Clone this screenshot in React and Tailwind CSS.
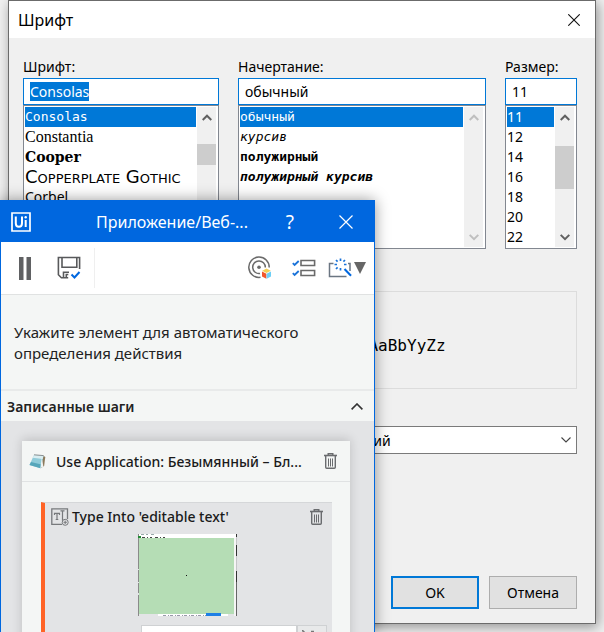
import { useEffect, useRef } from "react";

const UI = "font-['Noto_Sans','Open_Sans',sans-serif]";

const MONO = "font-['DejaVu_Sans_Mono',monospace] text-[13px]";

const FONTS = [
  { name: "Consolas", style: MONO },
  { name: "Constantia", style: "font-['Liberation_Serif',serif] text-[16px]" },
  { name: "Cooper", style: "font-['DejaVu_Serif',serif] text-[14px] font-black" },
  { name: "Copperplate Gothic", style: "font-['DejaVu_Sans',sans-serif] text-[18px] font-normal [font-variant-caps:small-caps]" },
  { name: "Corbel", style: "text-[14px]" },
  { name: "Courier", style: "font-['Liberation_Mono',monospace] text-[13px]" },
  { name: "Ebrima", style: "text-[14px]" },
];

const STYLES = [
  { name: "обычный", style: MONO },
  { name: "курсив", style: MONO + " italic" },
  { name: "полужирный", style: MONO + " font-bold" },
  { name: "полужирный курсив", style: MONO + " font-bold italic" },
];

const SIZES = ["11", "12", "14", "16", "18", "20", "22"].map((name) => ({ name, style: "text-[14px]" }));

function Chevron({ down, className }) {
  return (
    <svg viewBox="0 0 10 7" className={className} fill="none" stroke="currentColor" strokeWidth="2" aria-hidden="true">
      <path d={down ? "M.7 .9 5 5.2 9.3 .9" : "M.7 6 5 1.7 9.3 6"} />
    </svg>
  );
}

function ListBox({ label, items, thumb, disabled }) {
  return (
    <div className="flex h-36 border border-[#828790] bg-white p-px">
      <ul role="listbox" aria-label={label} className="min-w-0 flex-1 overflow-hidden">
        {items.map((item, i) => (
          <li
            key={item.name}
            role="option"
            aria-selected={i === 0}
            className={`h-5 whitespace-nowrap leading-5 ${item.style} ${i === 0 ? "bg-[#0078d7] text-white" : ""}`}
          >
            {item.name}
          </li>
        ))}
      </ul>
      <div className={`ml-px mr-px flex w-[19px] flex-col items-center justify-between bg-[#f0f0f0] ${disabled ? "text-[#bfbfbf]" : "text-[#606060]"}`}>
        <button type="button" aria-label="Вверх" disabled={disabled} className="flex h-5 w-full items-center justify-center">
          <Chevron className="h-[7px] w-[10px]" />
        </button>
        <div className="w-full flex-1">{thumb && <div className={`bg-[#cdcdcd] ${thumb}`} />}</div>
        <button type="button" aria-label="Вниз" disabled={disabled} className="flex h-5 w-full items-center justify-center">
          <Chevron down className="h-[7px] w-[10px]" />
        </button>
      </div>
    </div>
  );
}

function Field({ id, label, value, items, thumb, disabled, selected }) {
  const ref = useRef(null);
  useEffect(() => {
    if (selected) {
      ref.current.focus();
      ref.current.select();
    }
  }, [selected]);
  return (
    <div className="min-w-0">
      <label htmlFor={id} className="block h-[22px] text-[14px] leading-[22px]">{label}</label>
      <input
        id={id}
        ref={ref}
        defaultValue={value}
        className="block h-[27px] w-full border border-[#0078d7] bg-white px-1.5 text-[14px] leading-5 outline-none selection:bg-[#0078d7] selection:text-white"
      />
      <ListBox label={label} items={items} thumb={thumb} disabled={disabled} />
    </div>
  );
}

function FontDialog() {
  return (
    <section aria-label="Шрифт" className="absolute inset-x-2 top-0 flex h-[624px] flex-col border border-[#6b6b6b] bg-[#f0f0f0] shadow-[2px_3px_12px_rgba(0,0,0,0.4)]">
      <header className="flex h-[37px] shrink-0 items-center justify-between bg-white pl-[9px] pr-[15px]">
        <h1 className="text-[16px]">Шрифт</h1>
        <button type="button" aria-label="Закрыть">
          <svg viewBox="0 0 12 12" className="size-3" stroke="#111" strokeWidth="1.1" aria-hidden="true">
            <path d="M.3 .3 11.7 11.7M11.7 .3 .3 11.7" />
          </svg>
        </button>
      </header>
      <div className="flex flex-1 flex-col pl-3.5 pr-[18px] pt-[18px]">
        <div className="grid grid-cols-[196fr_248fr_72fr] gap-[19px]">
          <Field id="font" label="Шрифт:" value="Consolas" items={FONTS} thumb="mt-[17px] h-[21px]" selected />
          <Field id="style" label="Начертание:" value="обычный" items={STYLES} disabled />
          <Field id="size" label="Размер:" value="11" items={SIZES} thumb="mt-[19px] h-[43px]" />
        </div>
        <div className="ml-[214px] mt-[42px] flex h-[98px] items-center justify-center border border-[#dcdcdc] pt-3 font-['DejaVu_Sans_Mono',monospace] text-[16px]">
          AaBbYyZz
        </div>
        <div className="relative ml-[214px] mt-[37px]">
          <select aria-label="Набор символов" className="block h-7 w-full appearance-none border border-[#7a7a7a] bg-white px-1.5 text-[14px]">
            <option>Западноевропейский</option>
          </select>
          <svg viewBox="0 0 10 6" className="pointer-events-none absolute right-1.5 top-[11px] h-1.5 w-2.5" fill="none" stroke="#444" strokeWidth="1.1" aria-hidden="true">
            <path d="M.5 .5 5 5 9.5 .5" />
          </svg>
        </div>
        <div className="mb-3.5 mt-auto flex justify-end gap-2.5 text-[14px]">
          <button type="button" className="h-[33px] w-[88px] border-2 border-[#0078d7] bg-[#e1e1e1]">OK</button>
          <button type="button" className="h-[33px] w-[88px] border border-[#adadad] bg-[#e1e1e1]">Отмена</button>
        </div>
      </div>
    </section>
  );
}

function TrashIcon() {
  return (
    <svg viewBox="0 0 13 16" className="h-4 w-[13px]" fill="none" stroke="#6a6c6f" aria-hidden="true">
      <path d="M0 2.5h13" strokeWidth="1.6" />
      <path d="M4.2 2V.7h4.6V2M1.7 3v11.3q0 1 1 1h7.6q1 0 1-1V3" strokeWidth="1.4" />
      <path d="M4.5 5.5v8M6.5 5.5v8M8.5 5.5v8" strokeWidth="1" />
    </svg>
  );
}

function SaveIcon() {
  return (
    <svg viewBox="0 0 24 24" className="size-6" fill="none" stroke="#58595b" strokeWidth="1.6" aria-hidden="true">
      <path d="M22.6 13V1.5H1.4v17.2l3 3h6.8M5 2v9.3h14.8V2M6.5 21.5v-5.2H12M9.3 21.5v-3h2" />
      <path d="m14.5 18.5 3 3 5-5.5" stroke="#0067df" strokeWidth="2" />
    </svg>
  );
}

function TargetIcon() {
  return (
    <svg viewBox="0 0 24 24" className="size-6" fill="none" stroke="#6a6a6a" strokeWidth="1.5" aria-hidden="true">
      <path d="M12.5 21.3A10.2 10.2 0 1 1 21.2 11.5" />
      <path d="M12 17.5A6.3 6.3 0 1 1 17.3 11.5" />
      <circle cx="11" cy="11.3" r="1.8" fill="#6a6a6a" stroke="none" />
      <path d="m18.5 12.5 4.3 2.2-4.3 2.3-4.3-2.3z" fill="#f5cf55" stroke="none" />
      <path d="m14 15.5 4.4 2.2v5L14 20.5z" fill="#f2562c" stroke="none" />
      <path d="m23 15.5-4.4 2.2v5l4.4-2.2z" fill="#6dcff6" stroke="none" />
    </svg>
  );
}

function ChecklistIcon() {
  return (
    <svg viewBox="0 0 24 18" className="h-[18px] w-6" fill="none" stroke="#6a6a6a" strokeWidth="1.6" aria-hidden="true">
      <path d="M9 1.5h13.6v5H9zM9 11.5h13.6v5H9z" />
      <path d="m.8 4.2 1.8 1.8L6.7 2M.8 14.2 2.6 16l4.1-4" stroke="#1a73d9" strokeWidth="1.8" />
    </svg>
  );
}

function WandIcon() {
  return (
    <svg viewBox="0 0 24 19" className="h-[19px] w-6 overflow-visible" fill="none" stroke="#6b7682" strokeWidth="1.5" aria-hidden="true">
      <path d="M5.5 4.5h-4v13h17M20 4.5h2V12" />
      <path d="m16.5 10 6.5 6.8" stroke="#0067df" strokeWidth="2" />
      <path
        d="M12.5 -.5v2.5M12.5 9v2.5M6.5 5.5H9M16 5.5h2.5M8 1l1.6 1.6M17 1l-1.6 1.6M8 10l1.6-1.6"
        stroke="#1a73d9"
        strokeWidth="1.7"
      />
    </svg>
  );
}

function NotepadIcon() {
  return (
    <svg viewBox="0 0 17 16" className="h-4 w-[17px]" aria-hidden="true">
      <path d="m13.5 2 2.8 2-1.2 9-3.2 2z" fill="#8c7a5c" />
      <path d="m5 2 9.5.8-3 12.4L.5 12z" fill="#8fcbd9" />
      <path d="m5 2 9.5.8-.8 3.2L3.7 4.8z" fill="#d9edf1" />
      <path d="m2 9 10.4 2.4-.9 3.8L.5 12z" fill="#56a6ba" />
      <path d="m12.8 4 1.6 9.8-3 1.3z" fill="#eef3f3" />
      <path d="M5 1.8 14.5 2.6" stroke="#8a9092" />
    </svg>
  );
}

function TypeIcon() {
  return (
    <svg viewBox="0 0 18 18" className="size-[18px]" fill="none" stroke="#77797c" aria-hidden="true">
      <path d="M11 16.4H.8V.8h15.7V11" strokeWidth="1.3" />
      <path d="M3.5 7V5.3h5V7M6 5.3v6M4.7 11.5h2.6M9.5 2.8h4M11.5 2.8v10M11 13h1.5" strokeWidth="1.2" />
      <circle cx="14.2" cy="14.3" r="3" fill="#e3e4e6" />
      <path d="M12.5 14.3h3.4M14.2 12.6V16" />
    </svg>
  );
}

function Thumbnail() {
  return (
    <svg viewBox="0 0 99 82" className="h-[82px] w-[99px]" shapeRendering="crispEdges" role="img" aria-label="Снимок элемента">
      <path d="M0 0h99v82H0z" fill="#e3e4e6" />
      <path d="M1 0h97v5H1zM20 80h70v2H20z" fill="#fff" />
      <path d="M96 4h2v78h-2z" fill="#f5f5f5" />
      <path d="M1 4h95v76H1z" fill="#b5ddb5" />
      <path d="M.5 0v82" stroke="#8a8a8a" strokeDasharray="35 1 12 1 10 2" />
      <path d="M98.5 0v3M98.5 11v11M98.5 37v11" stroke="#333" />
      <path d="M98.5 3v8M98.5 22v15" stroke="#c4c5c7" />
      <path d="M98.5 48v34" stroke="#666" />
      <path d="M3 .5h15" stroke="#9aa" strokeDasharray="3 2 2 3" />
      <path d="M4 3.5h25" stroke="#444" strokeDasharray="3 2 1 2 2 3" />
      <path d="M0 2h3v2H0z" fill="#228b35" />
      <path d="M25 81.5h43" stroke="#99a" strokeDasharray="3 2 1 1" />
      <path d="M68 79h15v3H68z" fill="#1f7fe5" />
      <path d="M48 41h1v1h-1z" fill="#111" />
    </svg>
  );
}

function RecorderWindow() {
  return (
    <section aria-label="Приложение/Веб-рекордер" className="absolute bottom-0 left-0 top-[200px] flex w-[375px] flex-col overflow-hidden border border-b-0 border-[#0067df] bg-[#f4f6f5] shadow-[0_0_14px_rgba(0,0,0,0.4)]">
      <header className="flex h-[41px] shrink-0 items-center bg-[#0067df] pl-2.5 pr-[21px] text-white">
        <svg viewBox="0 0 20 20" className="size-5" fill="none" stroke="#fff" aria-hidden="true">
          <path d="M1 1h18v18H1z" strokeWidth="1.7" />
          <path d="M4.8 4.5v6.8q0 3.5 3.1 3.5t3.1-3.5V4.5M14.7 8v7" strokeWidth="2" />
          <circle cx="14.7" cy="5.2" r="1.2" fill="#fff" stroke="none" />
        </svg>
        <h2 className="ml-[65px] flex-1 whitespace-nowrap text-[16px]">Приложение/Веб-...</h2>
        <button type="button" aria-label="Справка" className="text-[19px] leading-6">?</button>
        <button type="button" aria-label="Закрыть" className="ml-[45px]">
          <svg viewBox="0 0 14 14" className="size-3.5" stroke="#fff" strokeWidth="1.2" aria-hidden="true">
            <path d="M.5 .5 13.5 13.5M13.5 .5 .5 13.5" />
          </svg>
        </button>
      </header>
      <div className="flex h-[53px] shrink-0 items-center border-b border-[#e0e2e2] bg-white pl-[18px] pr-2">
        <button type="button" aria-label="Пауза">
          <svg viewBox="0 0 12 23" className="h-[23px] w-3" fill="#606163" aria-hidden="true">
            <path d="M0 0h4.5v23H0zM7.5 0H12v23H7.5z" />
          </svg>
        </button>
        <button type="button" aria-label="Сохранить" className="ml-[26px]"><SaveIcon /></button>
        <span className="ml-[13px] h-10 w-px bg-[#efefef]" />
        <div className="ml-auto flex items-center">
          <button type="button" aria-label="Выбрать элемент"><TargetIcon /></button>
          <button type="button" aria-label="Параметры" className="ml-5"><ChecklistIcon /></button>
          <button type="button" aria-label="Автоматическое определение" className="ml-3 flex items-center">
            <WandIcon />
            <svg viewBox="0 0 12 12" className="ml-0.5 size-3" fill="#666" aria-hidden="true">
              <path d="M0 0h12L6 12z" />
            </svg>
          </button>
        </div>
      </div>
      <p className="h-[94px] shrink-0 pl-[13px] pr-12 pt-[27px] text-[15px] leading-[21px] text-[#222]">
        Укажите элемент для автоматического определения действия
      </p>
      <div className="flex h-8 shrink-0 items-center justify-between border-t-2 border-[#e8eaea] pl-1.5 pr-[11px] text-[#222]">
        <h3 className="text-[14px] font-semibold">Записанные шаги</h3>
        <button type="button" aria-label="Свернуть">
          <svg viewBox="0 0 12 7" className="h-[7px] w-3" fill="none" stroke="#333" strokeWidth="1.6" aria-hidden="true">
            <path d="M.6 6.4 6 1l5.4 5.4" />
          </svg>
        </button>
      </div>
      <div className="flex-1 bg-[#e3e4e6] pl-[21px] pr-6 pt-5 text-[#1a1a1a]">
        <article className="flex h-full flex-col bg-[#f4f6f5] shadow-[0_-2px_10px_rgba(0,0,0,0.16)]">
          <header className="flex h-[41px] shrink-0 items-center border-b border-[#e0e2e3] pl-[7px] pr-[13px]">
            <NotepadIcon />
            <h4 className="ml-2.5 flex-1 whitespace-nowrap text-[14px] font-medium">Use Application: Безымянный – Бл...</h4>
            <button type="button" aria-label="Удалить приложение"><TrashIcon /></button>
          </header>
          <div className="ml-[19px] mr-[18px] mt-5 flex-1 border-l-4 border-t border-l-[#ff6326] border-t-[#d5d7d9] bg-[#e3e4e6]">
            <div className="flex h-[31px] items-center pb-1 pl-1.5 pr-[9px]">
              <TypeIcon />
              <h5 className="ml-[3px] flex-1 whitespace-nowrap text-[14px] font-medium">Type Into 'editable text'</h5>
              <button type="button" aria-label="Удалить шаг"><TrashIcon /></button>
            </div>
            <div className="pl-[93px]"><Thumbnail /></div>
            <div className="ml-24 mr-[5px] mt-[9px] flex">
              <input aria-label="Текст" className="h-7 min-w-0 flex-1 border border-[#cfd1d3] bg-white" />
              <button type="button" aria-label="Параметры текста" className="flex h-7 w-[30px] border border-[#cfd1d3] bg-[#e8e9ea] pl-1 pt-1">
                <svg viewBox="0 0 14 14" className="size-3.5" fill="none" stroke="#777" strokeWidth="1.6" aria-hidden="true">
                  <path d="m0 0 4 4-4 4M9 1.5h3" />
                </svg>
              </button>
            </div>
          </div>
        </article>
      </div>
    </section>
  );
}

export default function App() {
  return (
    <main className={`relative h-screen min-h-[632px] overflow-hidden bg-[#f1f1f1] text-black ${UI}`}>
      <FontDialog />
      <RecorderWindow />
    </main>
  );
}
